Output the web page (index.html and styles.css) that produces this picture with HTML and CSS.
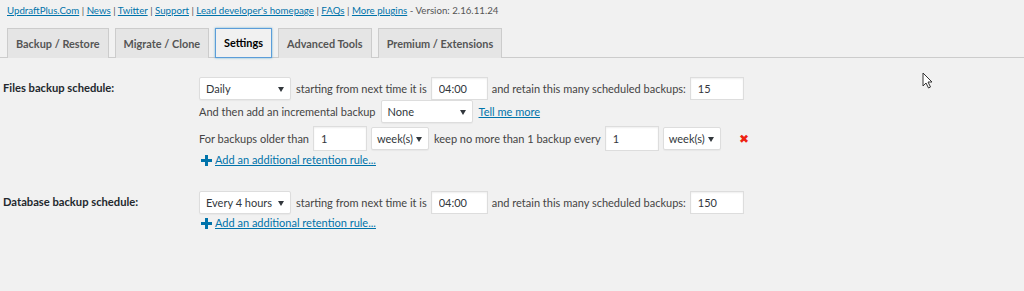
FILE: index.html
```html
<!DOCTYPE html>
<html>
<head>
	<meta charset="utf-8">
	<title>UpdraftPlus - Settings</title>
	<link rel="stylesheet" href="styles.css">
</head>
<body>
	<div class="header">
		<p class="links">
			<a href="#">UpdraftPlus.Com</a> | <a href="#">News</a> | <a href="#">Twitter</a> | <a href="#">Support</a> | <a href="#">Lead developer's homepage</a> | <a href="#">FAQs</a> | <a href="#">More plugins</a> - Version: 2.16.11.24
		</p>
		<nav class="tabs">
			<a class="tab" href="#">Backup / Restore</a>
			<a class="tab" href="#">Migrate / Clone</a>
			<a class="tab active" href="#">Settings</a>
			<a class="tab" href="#">Advanced Tools</a>
			<a class="tab" href="#">Premium / Extensions</a>
		</nav>
	</div>

	<div class="settings">
		<div class="setting files">
			<label class="setting-label">Files backup schedule:</label>
			<div class="setting-body">
				<div class="row">
					<div class="select w-sched">Daily</div>
					<span>starting from next time it is</span>
					<input class="field w-time" type="text" value="04:00">
					<span>and retain this many scheduled backups:</span>
					<input class="field w-num" type="text" value="15">
				</div>
				<div class="row">
					<span>And then add an incremental backup</span>
					<div class="select w-sched">None</div>
					<a class="more" href="#">Tell me more</a>
				</div>
				<div class="row tall-row">
					<span>For backups older than</span>
					<input class="field w-num tall" type="text" value="1">
					<div class="select w-unit">week(s)</div>
					<span>keep no more than 1 backup every</span>
					<input class="field w-num tall" type="text" value="1">
					<div class="select w-unit">week(s)</div>
					<span class="remove">&#10006;</span>
				</div>
				<a class="add-rule" href="#">
					<svg width="11" height="11" viewBox="0 0 11 11"><path d="M4 0h3v4h4v3H7v4H4V7H0V4h4z" fill="#0073aa"/></svg>
					<span>Add an additional retention rule...</span>
				</a>
			</div>
		</div>

		<div class="setting db">
			<label class="setting-label">Database backup schedule:</label>
			<div class="setting-body">
				<div class="row">
					<div class="select w-sched">Every 4 hours</div>
					<span>starting from next time it is</span>
					<input class="field w-time" type="text" value="04:00">
					<span>and retain this many scheduled backups:</span>
					<input class="field w-num" type="text" value="150">
				</div>
				<a class="add-rule" href="#">
					<svg width="11" height="11" viewBox="0 0 11 11"><path d="M4 0h3v4h4v3H7v4H4V7H0V4h4z" fill="#0073aa"/></svg>
					<span>Add an additional retention rule...</span>
				</a>
			</div>
		</div>
	</div>

	<svg class="cursor" width="12" height="18" viewBox="0 0 12 18"><path d="M1 1v13l3-3 2.5 5 2-1-2.5-5h4z" fill="#fff" stroke="#333" stroke-width="1"/></svg>
</body>
</html>
```

FILE: styles.css
```css
body {
	margin: 0;
	background-color: #f1f1f1;
	font-family: Lato, sans-serif;
	font-size: 11px;
	color: #444;
	position: relative;
	height: 291px;
	overflow: hidden;
}

a {
	color: #0073aa;
}

.header {
	padding: 0 0 0 7px;
	border-bottom: 1px solid #ccc;
}

.links {
	margin: 0;
	padding-top: 2px;
	height: 26px;
	line-height: 16px;
	font-size: 9.7px;
	color: #555;
}

.tabs {
	display: flex;
	gap: 6px;
	height: 29px;
}

.tab {
	display: block;
	padding: 0 8px;
	line-height: 30px;
	border: 1px solid #ccc;
	border-bottom: none;
	background-color: #e5e5e5;
	color: #555;
	font-size: 10.9px;
	font-weight: 700;
	text-decoration: none;
	margin-bottom: -1px;
}

.tab.active {
	background-color: #f1f1f1;
	color: #000;
	border: 1px solid #5b9dd9;
	line-height: 28px;
	box-shadow: 0 0 2px rgba(30,140,190,0.6);
}

.settings {
	padding: 20px 0 0 3px;
}

.setting {
	display: grid;
	grid-template-columns: 196px 1fr;
}

.setting.db {
	margin-top: 24px;
}

.setting-label {
	font-weight: 700;
	font-size: 11.2px;
	color: #23282d;
	padding-top: 2px;
	line-height: 16px;
}

.setting-body {
	display: flex;
	flex-direction: column;
	margin-top: -1px;
}

.row {
	display: flex;
	align-items: center;
	gap: 5px;
	height: 23px;
}

.row.tall-row {
	height: 27px;
	margin-top: 2px;
}

.field {
	box-sizing: border-box;
	height: 23px;
	border: 1px solid #ddd;
	box-shadow: inset 0 1px 2px rgba(0,0,0,0.07);
	background-color: #fff;
	font-family: inherit;
	font-size: 11px;
	color: #32373c;
	padding: 0 7px;
	margin: 0 -1px;
}

.field.tall {
	height: 25px;
}

.w-time {
	width: 57px;
}

.w-num {
	width: 54px;
}

.select {
	box-sizing: border-box;
	height: 23px;
	line-height: 21px;
	border: 1px solid #ddd;
	border-radius: 2px;
	background-color: #fff;
	color: #32373c;
	padding: 0 6px;
	position: relative;
	box-shadow: 0 1px 1px rgba(0,0,0,0.04);
	white-space: nowrap;
}

.select::after {
	content: "";
	position: absolute;
	right: 6px;
	top: 9px;
	border-left: 3px solid transparent;
	border-right: 3px solid transparent;
	border-top: 5px solid #32373c;
}

.w-sched {
	width: 92px;
}

.w-unit {
	width: 58px;
	padding-left: 5px;
}

.more {
	margin-left: 1px;
}

.remove {
	color: #e21;
	font-size: 12px;
	margin-left: 13px;
}

.add-rule {
	display: flex;
	align-items: center;
	gap: 3px;
	margin-left: 2px;
	line-height: 16px;
}

.db .add-rule {
	margin-top: 1px;
}

.add-rule svg {
	flex: none;
}

.cursor {
	position: absolute;
	left: 922px;
	top: 72px;
}
```
